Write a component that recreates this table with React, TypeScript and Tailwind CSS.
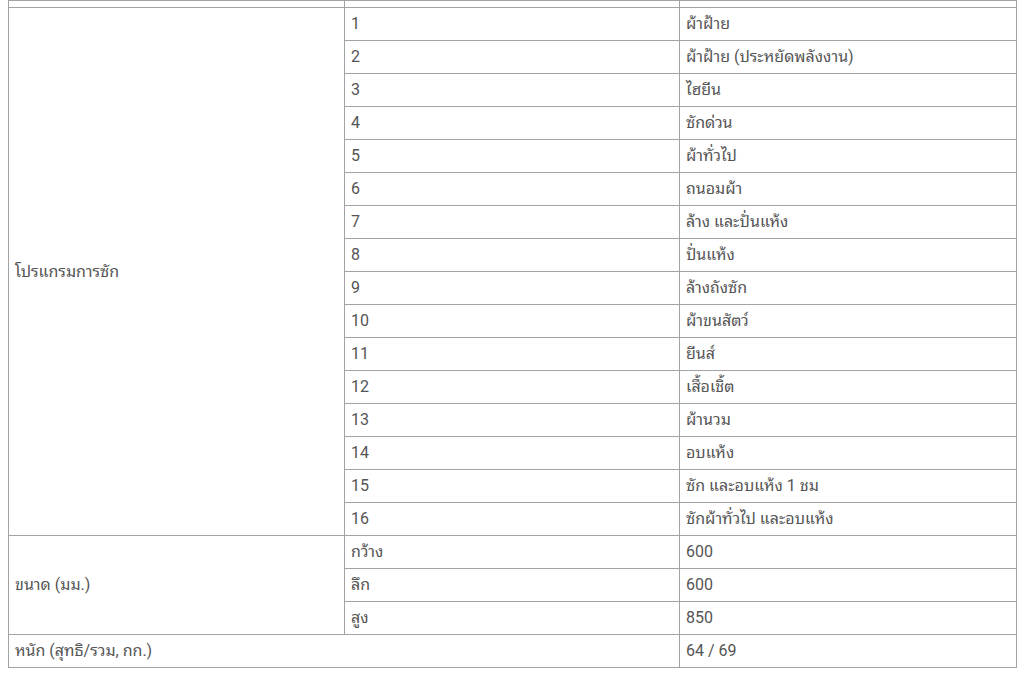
import React from "react";

const programs = [
  "ผ้าฝ้าย",
  "ผ้าฝ้าย (ประหยัดพลังงาน)",
  "ไฮยีน",
  "ซักด่วน",
  "ผ้าทั่วไป",
  "ถนอมผ้า",
  "ล้าง และปั่นแห้ง",
  "ปั่นแห้ง",
  "ล้างถังซัก",
  "ผ้าขนสัตว์",
  "ยีนส์",
  "เสื้อเชิ้ต",
  "ผ้านวม",
  "อบแห้ง",
  "ซัก และอบแห้ง 1 ชม",
  "ซักผ้าทั่วไป และอบแห้ง",
];

const cell = "border border-[#a3a3a3] px-[6px] h-[33px] align-middle text-left font-normal";

export default function App() {
  return (
    <div
      className="bg-white w-[1024px] h-[678px] overflow-hidden pl-[8px] text-[16px] leading-[20px] text-[#555555]"
      style={{
        fontFamily:
          'Roboto, "Noto Sans Thai Looped", "Leelawadee UI", Tahoma, Waree, Loma, Garuda, "Noto Sans Thai", "Noto Sans", "DejaVu Sans", sans-serif',
      }}
    >
      <table className="border-collapse w-[1008px] table-fixed">
        <colgroup>
          <col className="w-[336px]" />
          <col className="w-[335px]" />
          <col className="w-[337px]" />
        </colgroup>
        <tbody>
          <tr>
            <td className="border border-[#a3a3a3] h-[7px] p-0" />
            <td className="border border-[#a3a3a3] h-[7px] p-0" />
            <td className="border border-[#a3a3a3] h-[7px] p-0" />
          </tr>
          {programs.map((p, i) => (
            <tr key={i}>
              {i === 0 && (
                <td rowSpan={16} className={cell}>
                  โปรแกรมการซัก
                </td>
              )}
              <td className={cell + (i === 15 ? " h-[32px]" : "")}>{i + 1}</td>
              <td className={cell + (i === 15 ? " h-[32px]" : "")}>{p}</td>
            </tr>
          ))}
          <tr>
            <td rowSpan={3} className={cell}>
              ขนาด (มม.)
            </td>
            <td className={cell}>กว้าง</td>
            <td className={cell}>600</td>
          </tr>
          <tr>
            <td className={cell}>ลึก</td>
            <td className={cell}>600</td>
          </tr>
          <tr>
            <td className={cell}>สูง</td>
            <td className={cell}>850</td>
          </tr>
          <tr>
            <td colSpan={2} className={cell + " h-[32px]"}>
              หนัก (สุทธิ/รวม, กก.)
            </td>
            <td className={cell + " h-[32px]"}>64 / 69</td>
          </tr>
        </tbody>
      </table>
    </div>
  );
}
